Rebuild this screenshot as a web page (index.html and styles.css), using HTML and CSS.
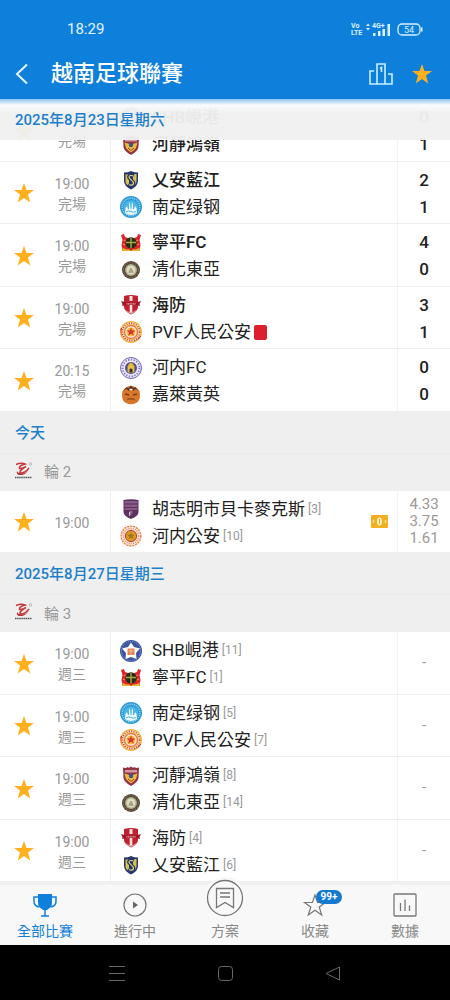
FILE: index.html
```html
<!DOCTYPE html>
<html lang="zh-Hant">
<head>
<meta charset="UTF-8" />
<meta name="viewport" content="width=device-width, initial-scale=1" />
<title>越南足球聯賽</title>
<link rel="stylesheet" href="styles.css">
</head>
<body>
  <svg class="sprite" aria-hidden="true">
    <symbol id="star" viewBox="0 0 20 20"><path d="M10 0l2.500 7H20l-6 4.600 2.200 7.900L10 15l-6.200 4.500L6 11.600 0 7h7.500z"/></symbol>

    <symbol id="nghean" viewBox="0 0 22 22">
      <path d="M4 3.500Q8 3.500 11 2q3 1.500 7 1.500V12q0 5-7 8.500Q4 17 4 12z" fill="#26366f"/>
      <path d="M5.500 5.500H9v12Q5.500 15 5.500 12zM13 5h3.500v7q0 3-3.500 5.500z" fill="#d8c24c"/>
      <path d="M14 6.500Q9 4.500 8.500 8c0 3 5.500 3 5.500 6.500-.5 3-4 3-6 1" fill="none" stroke="#26366f" stroke-width="3"/>
      <path d="M13.500 7Q9.500 5.500 9 8c0 2.500 5 3.500 4.500 6.500-.5 2-3 2-4.500 1" fill="none" stroke="#e9da72" stroke-width="1.100"/>
    </symbol>
    <symbol id="namdinh" viewBox="0 0 22 22">
      <circle cx="11" cy="11" r="11" fill="#2a9ad6"/>
      <circle cx="11" cy="11" r="8.800" fill="none" stroke="#a8dcf5" stroke-width="1.200" stroke-dasharray="1.200 1"/>
      <circle cx="11" cy="11.500" r="7.300" fill="#49b4e6"/>
      <path d="M5 17l.5-5 1.500-2 1 3h1V8l1-2 .5 7h1L12 6l1 2v5h1l1-3 1.500 2 .5 5q-3 2-6 2t-6-2z" fill="#eef9ff"/>
      <path d="M6 16q2-2 5-.5t5 0" fill="none" stroke="#49b4e6"/>
    </symbol>
    <symbol id="ninhbinh" viewBox="0 0 22 22">
      <path d="M1 3l3-1 1 3 3 1h6l3-1 1-3 3 1-1.500 5 1 5-1 6H2.500l-1-6 1-5z" fill="#d9252b"/>
      <path d="M4 8l2 1M18 8l-2 1M3 12l2 1M19 12l-2 1" stroke="#ff8b4a" stroke-width="1.300"/>
      <circle cx="11" cy="11" r="5.700" fill="#242c17"/>
      <path d="M11 6v10M6 10.500h10" stroke="#a9a943" stroke-width="1.400"/>
      <path d="M2.500 15.500q4 3.500 8.500 1 4.500 2.500 8.500-1V19h-17z" fill="#e7b42c"/>
      <path d="M8.500 16.500L11 19l2.500-2.500z" fill="#c92424"/>
    </symbol>
    <symbol id="thanhhoa" viewBox="0 0 22 22">
      <circle cx="11" cy="11" r="9" fill="#4c4a3c"/>
      <circle cx="11" cy="11" r="7.500" fill="none" stroke="#8a5b45" stroke-width="1.200" stroke-dasharray="2 1"/>
      <circle cx="11" cy="11" r="6" fill="#a9ad8c"/>
      <circle cx="11" cy="11" r="4.500" fill="#e0dcc0"/>
      <path d="M9 12.500l2-3.500 2 3.500zM8.500 13.500h5" fill="#b5a985" stroke="#96916f" stroke-width=".7"/>
    </symbol>
    <symbol id="haiphong" viewBox="0 0 22 22">
      <path d="M4 2q7-2 14 0v11q0 4-7 7.500Q4 17 4 13z" fill="#c3202f"/>
      <path d="M9.500 2h3v5h-3zM9.700 11h2.600v8l-1.300.8-1.300-.8z" fill="#f8e3e3"/>
      <path d="M1 7l5 1.500h10L21 7l-1.500 3L20 12l-4-1H6l-4 1 .5-2z" fill="#9f1524"/>
      <path d="M6.500 9.800h9" stroke="#f3c6c6" stroke-width="1.200" stroke-dasharray="1 .6"/>
      <path d="M5 16q6 5.500 12 0" fill="none" stroke="#e5a2a8"/>
    </symbol>
    <symbol id="pvf" viewBox="0 0 22 22">
      <circle cx="11" cy="11" r="11" fill="#edb83f"/>
      <path d="M1.500 7A10.500 10.500 0 0 0 20.500 15" fill="none" stroke="#cf3434" stroke-width="1.500"/>
      <circle cx="11" cy="11" r="8.700" fill="none" stroke="#fff0d8" stroke-width="2"/>
      <circle cx="11" cy="11" r="8.700" fill="none" stroke="#d6453a" stroke-width="1.600" stroke-dasharray="1.200 1.200"/>
      <circle cx="11" cy="11" r="6.300" fill="#fff3dc" stroke="#d63c34" stroke-width=".8"/>
      <circle cx="11" cy="11" r="4.500" fill="#f4b63d"/>
      <path d="M11 6.500l1.200 3h3.200l-2.500 2 .9 3.200-2.800-1.900-2.800 1.900.9-3.200-2.500-2h3.200z" fill="#d4352d"/>
    </symbol>
    <symbol id="hanoi" viewBox="0 0 22 22">
      <circle cx="11" cy="11" r="10.500" fill="#eceafa" stroke="#6f67b5"/>
      <circle cx="11" cy="11" r="8.400" fill="none" stroke="#7771c0" stroke-width="1.800" stroke-dasharray="1.300 1.500"/>
      <circle cx="11" cy="11" r="6" fill="#50498e"/>
      <path d="M7.500 15V9.500L9 7l2-1.500L13 7l1.500 2.500V15q-3.500 2-7 0z" fill="#e6bd40"/>
      <path d="M9.500 15.500v-3q1.500-2 3 0v3z" fill="#2f2a4c"/>
    </symbol>
    <symbol id="gialai" viewBox="0 0 22 22">
      <path d="M2.500 7Q6 2 11 2t8.500 5L20 10q0 8-4 9-5 2.500-10 0-4-1-4-9z" fill="#d8762b"/>
      <path d="M4 6l2.500-2.800 2 1L11 1.500l2.500 2.500 2-.8L18 6l-3-1-1.500 2L11 5 8.500 7 7 5z" fill="#5d3320"/>
      <path d="M5 10l4 1M17 10l-4 1" stroke="#7c3c1a" stroke-width="1.300"/>
      <path d="M8 14h6l1.500 2.500-2-.5h-5l-2 .5z" fill="#a4561f"/>
      <path d="M9.500 5.500h3" stroke="#fff" stroke-width="1.500"/>
    </symbol>
    <symbol id="hatinh" viewBox="0 0 22 22">
      <path d="M3 2.500Q6 3.500 7.500 2 9 3.500 11 1.500q2 2 3.500.5Q16 3.500 19 2.500L18.500 13q-.5 4-7.500 8Q4 17 3.500 13z" fill="#923044"/>
      <path d="M5 5h12v2.500H5z" fill="#cf9a9f"/>
      <path d="M4.500 8.500l5 1.500L11 12l1.500-2 5-1.500L16 14l-3 3-2 1.500L9 17l-3-3z" fill="#e9bc3d"/>
      <circle cx="11" cy="11" r="2.200" fill="#39568f"/>
      <path d="M8 14l3 2.500 3-2.500" fill="none" stroke="#a44330"/>
    </symbol>
    <symbol id="becamex" viewBox="0 0 22 22">
      <path d="M3.500 2Q11 .5 18.500 2v12q0 4-7.500 7-7.500-3-7.500-7z" fill="#5d3060"/>
      <path d="M4.500 4h13M4.500 8h13M4.500 11h13" stroke="#b285a8" stroke-width="1.100"/>
      <path d="M4.500 6h13" stroke="#7e4a7b" stroke-width="1.500"/>
      <path d="M9.500 14h3M9.500 14v4M9.500 16h2" stroke="#d2aacb" stroke-width="1.100"/>
    </symbol>
    <symbol id="cahn" viewBox="0 0 22 22">
      <circle cx="11" cy="11" r="10.800" fill="#fbe9dc"/>
      <circle cx="11" cy="11" r="9.800" fill="none" stroke="#e2753f" stroke-width="1.200" stroke-dasharray="2 1"/>
      <circle cx="11" cy="11" r="7.600" fill="none" stroke="#e48354" stroke-width="1.500" stroke-dasharray="1 1.200"/>
      <circle cx="11" cy="11" r="5.600" fill="#dd9a24" stroke="#b93a27"/>
      <path d="M11 7l1 2.800h3L12.700 11.500l.8 2.800L11 12.600l-2.500 1.700.8-2.800L7 9.800h3z" fill="#9b7620"/>
    </symbol>
    <symbol id="danang" viewBox="0 0 22 22">
      <circle cx="11" cy="11" r="11" fill="#3b55a0"/>
      <circle cx="11" cy="11" r="9.600" fill="none" stroke="#94a3d0" stroke-dasharray="1 1.200"/>
      <path d="M11 2.500l3 4.500 6 1.500-4 4.500.5 6L11 17l-5.500 2 .5-6-4-4.500L8 7z" fill="#fff"/>
      <path d="M7.500 8.500h7V15h-7z" fill="#e3824a"/>
      <path d="M8.500 11h5M11 9v6" stroke="#f8cba9" stroke-width=".8"/>
    </symbol>
    <symbol id="vleague" viewBox="0 0 20 18">
      <path d="M2 2.500Q7 .500 11 2 5 3.500 5.500 6.500 8 7 12 4.500 5 8.500 6 11q5 .5 9-5" fill="none" stroke="#c8373a" stroke-width="1.500"/>
      <path d="M3 9q-1 4.500 4 4 4 0 7-4-3 3-6.500 2.500Q4 11.500 3 9z" fill="#b5282c"/>
      <circle cx="16.500" cy="2" r="1.300" fill="none" stroke="#aaa" stroke-width=".8"/>
      <path d="M1 15.500h17" stroke="#555" stroke-width="1.600" stroke-dasharray="1.500 .6"/>
    </symbol>
  </svg>

  <header class="top">
    <div class="status">
      <span class="clock">18:29</span>
      <svg class="signals" width="74" height="18" viewBox="0 0 74 18" fill="none" stroke="#d9f2ff">
        <g fill="#d9f2ff" stroke="none">
          <text x="0" y="8" class="tiny">Vo</text>
          <text x="0" y="15" class="tiny">LTE</text>
          <text x="21" y="8" class="tiny">4G+</text>
          <path d="M15 6l2-2.500L19 6zM15 8h4l-2 2.500z"/>
          <path d="M22 13h2.500v3H22zM27 11h2.500v5H27zM31.500 9H34v7h-2.500zM36.500 4H39v12h-2.500z"/>
          <path d="M70 7.500h1.500v4H70z"/>
          <text x="53" y="13" class="percent">54</text>
        </g>
        <rect x="47" y="4" width="22" height="11" rx="4" stroke-width="1.300"/>
      </svg>
    </div>
    <div class="appbar">
      <button class="icon-btn back" aria-label="返回">
        <svg width="14" height="22" viewBox="0 0 14 22" fill="none" stroke="#e6f8ff" stroke-width="2"><path d="M12 1.500L2 11l10 9.500"/></svg>
      </button>
      <h1>越南足球聯賽</h1>
      <button class="icon-btn" aria-label="積分榜">
        <svg width="24" height="22" viewBox="0 0 24 22" fill="none" stroke="#c9efff" stroke-width="1.600"><path d="M5 8H1v13h22V11h-4M8 21V1h8v20M11 5.500l1.500-1V9"/></svg>
      </button>
      <button class="icon-btn" aria-label="收藏聯賽">
        <svg class="star" width="20" height="20"><use href="#star"/></svg>
      </button>
    </div>
  </header>

  <main class="list">
    <h2 class="date pinned">2025年8月23日星期六</h2>

    <article class="match">
      <button class="fav" aria-label="收藏"><svg class="star" width="20" height="20"><use href="#star"/></svg></button>
      <div class="time"><span>19:00</span><span>完場</span></div>
      <div class="teams">
        <div class="team win"><svg class="badge"><use href="#danang"/></svg>SHB峴港</div>
        <div class="team win"><svg class="badge"><use href="#hatinh"/></svg>河靜鴻嶺</div>
      </div>
      <div class="score"><span>0</span><span>1</span></div>
    </article>

    <article class="match">
      <button class="fav" aria-label="收藏"><svg class="star" width="20" height="20"><use href="#star"/></svg></button>
      <div class="time"><span>19:00</span><span>完場</span></div>
      <div class="teams">
        <div class="team win"><svg class="badge"><use href="#nghean"/></svg>乂安藍江</div>
        <div class="team"><svg class="badge"><use href="#namdinh"/></svg>南定绿钢</div>
      </div>
      <div class="score"><span>2</span><span>1</span></div>
    </article>

    <article class="match">
      <button class="fav" aria-label="收藏"><svg class="star" width="20" height="20"><use href="#star"/></svg></button>
      <div class="time"><span>19:00</span><span>完場</span></div>
      <div class="teams">
        <div class="team win"><svg class="badge"><use href="#ninhbinh"/></svg>寧平FC</div>
        <div class="team"><svg class="badge"><use href="#thanhhoa"/></svg>清化東亞</div>
      </div>
      <div class="score"><span>4</span><span>0</span></div>
    </article>

    <article class="match">
      <button class="fav" aria-label="收藏"><svg class="star" width="20" height="20"><use href="#star"/></svg></button>
      <div class="time"><span>19:00</span><span>完場</span></div>
      <div class="teams">
        <div class="team win"><svg class="badge"><use href="#haiphong"/></svg>海防</div>
        <div class="team"><svg class="badge"><use href="#pvf"/></svg>PVF人民公安<i class="red-card"></i></div>
      </div>
      <div class="score"><span>3</span><span>1</span></div>
    </article>

    <article class="match">
      <button class="fav" aria-label="收藏"><svg class="star" width="20" height="20"><use href="#star"/></svg></button>
      <div class="time"><span>20:15</span><span>完場</span></div>
      <div class="teams">
        <div class="team"><svg class="badge"><use href="#hanoi"/></svg>河内FC</div>
        <div class="team"><svg class="badge"><use href="#gialai"/></svg>嘉萊黃英</div>
      </div>
      <div class="score"><span>0</span><span>0</span></div>
    </article>

    <h2 class="date">今天</h2>
    <h3 class="round"><svg width="20" height="18"><use href="#vleague"/></svg>輪 2</h3>

    <article class="match">
      <button class="fav" aria-label="收藏"><svg class="star" width="20" height="20"><use href="#star"/></svg></button>
      <div class="time"><span>19:00</span></div>
      <div class="teams">
        <div class="team"><svg class="badge"><use href="#becamex"/></svg>胡志明市貝卡麥克斯<small>[3]</small></div>
        <div class="team"><svg class="badge"><use href="#cahn"/></svg>河内公安<small>[10]</small></div>
      </div>
      <svg class="ticket" width="17" height="13" viewBox="0 0 17 13">
        <rect width="17" height="13" rx="1" fill="#f3ae22"/>
        <ellipse cx="8.500" cy="6.500" rx="2.500" ry="4" fill="#fff3cc"/>
        <path d="M2.500 5v3M14.500 5v3" stroke="#fbdc8c" stroke-width="1.500"/>
        <path d="M8.500 4v5" stroke="#eda51d"/>
      </svg>
      <div class="odds"><span>4.33</span><span>3.75</span><span>1.61</span></div>
    </article>

    <h2 class="date">2025年8月27日星期三</h2>
    <h3 class="round"><svg width="20" height="18"><use href="#vleague"/></svg>輪 3</h3>

    <article class="match">
      <button class="fav" aria-label="收藏"><svg class="star" width="20" height="20"><use href="#star"/></svg></button>
      <div class="time"><span>19:00</span><span>週三</span></div>
      <div class="teams">
        <div class="team"><svg class="badge"><use href="#danang"/></svg>SHB峴港<small>[11]</small></div>
        <div class="team"><svg class="badge"><use href="#ninhbinh"/></svg>寧平FC<small>[1]</small></div>
      </div>
      <div class="odds">-</div>
    </article>

    <article class="match">
      <button class="fav" aria-label="收藏"><svg class="star" width="20" height="20"><use href="#star"/></svg></button>
      <div class="time"><span>19:00</span><span>週三</span></div>
      <div class="teams">
        <div class="team"><svg class="badge"><use href="#namdinh"/></svg>南定绿钢<small>[5]</small></div>
        <div class="team"><svg class="badge"><use href="#pvf"/></svg>PVF人民公安<small>[7]</small></div>
      </div>
      <div class="odds">-</div>
    </article>

    <article class="match">
      <button class="fav" aria-label="收藏"><svg class="star" width="20" height="20"><use href="#star"/></svg></button>
      <div class="time"><span>19:00</span><span>週三</span></div>
      <div class="teams">
        <div class="team"><svg class="badge"><use href="#hatinh"/></svg>河靜鴻嶺<small>[8]</small></div>
        <div class="team"><svg class="badge"><use href="#thanhhoa"/></svg>清化東亞<small>[14]</small></div>
      </div>
      <div class="odds">-</div>
    </article>

    <article class="match">
      <button class="fav" aria-label="收藏"><svg class="star" width="20" height="20"><use href="#star"/></svg></button>
      <div class="time"><span>19:00</span><span>週三</span></div>
      <div class="teams">
        <div class="team"><svg class="badge"><use href="#haiphong"/></svg>海防<small>[4]</small></div>
        <div class="team"><svg class="badge"><use href="#nghean"/></svg>乂安藍江<small>[6]</small></div>
      </div>
      <div class="odds">-</div>
    </article>
  </main>

  <nav class="tabs">
    <a href="#all" class="tab active">
      <svg width="24" height="24" viewBox="0 0 24 24" fill="none" stroke="#0f7fdc" stroke-width="1.500"><path d="M5 1h14v8q0 3-1 5l-4 3h-4l-4-3q-1-2-1-5z" fill="#0f7fdc" stroke="none"/><path d="M5 4H1v4q0 5 5 6M19 4h4v4q0 5-5 6M12 16v7M8 23h8"/></svg>
      全部比賽
    </a>
    <a href="#live" class="tab">
      <svg width="24" height="24" viewBox="0 0 24 24" fill="none" stroke="#777" stroke-width="1.200"><circle cx="12" cy="12" r="11"/><path d="M10 8.500l5 3.500-5 3.500z" fill="#666" stroke="none"/></svg>
      進行中
    </a>
    <a href="#plan" class="tab plan">
      <svg class="bubble" width="42" height="42" viewBox="0 0 42 42" fill="none" stroke="#777" stroke-width="1.300"><circle cx="21" cy="21" r="21" fill="#f8f8f8" stroke="none"/><circle cx="21" cy="21" r="17.500"/><path d="M12.500 11.500h17v19L21 25.500l-8.500 5zM16 16h10M16 20h10"/></svg>
      方案
    </a>
    <a href="#favorites" class="tab">
      <svg width="24" height="24" viewBox="0 0 24 24" fill="none" stroke="#777" stroke-width="1.200"><path d="M12 2l2.600 7.500h8L16.200 14l2.500 8L12 17.300 5.300 22l2.500-8L1.400 9.500h8z"/></svg>
      <span class="count">99+</span>
      收藏
    </a>
    <a href="#stats" class="tab">
      <svg width="24" height="24" viewBox="0 0 24 24" fill="none" stroke="#777" stroke-width="1.300"><rect x="1" y="1" width="22" height="22" rx="1"/><path d="M7.500 10v8M12 6.500V18M16.500 12.500V18"/></svg>
      數據
    </a>
  </nav>

  <footer class="system">
    <button class="icon-btn" aria-label="選單"><svg width="18" height="18" viewBox="0 0 18 18" stroke="#686868"><path d="M1 2.500h16M1 9.500h16M1 16.500h16"/></svg></button>
    <button class="icon-btn" aria-label="主畫面"><svg width="18" height="18" viewBox="0 0 18 18" fill="none" stroke="#686868"><rect x="2.500" y="2.500" width="14" height="14" rx="3"/></svg></button>
    <button class="icon-btn" aria-label="返回"><svg width="18" height="18" viewBox="0 0 18 18" fill="none" stroke="#686868"><path d="M15.500 3v13L2 9.500z" stroke-linejoin="round"/></svg></button>
  </footer>
</body>
</html>
```
FILE: styles.css
```css
* {
  box-sizing: border-box;
}
body {
  margin: 0;
  min-height: 100vh;
  display: flex;
  flex-direction: column;
  font-family: Roboto, "Noto Sans CJK TC", sans-serif;
  color: #222;
  background: #fff;
}
h1, h2, h3 {
  margin: 0;
}
button {
  border: 0;
  padding: 0;
  background: none;
  cursor: pointer;
}
svg {
  display: block;
  flex: none;
}
.sprite {
  position: absolute;
  width: 0;
  height: 0;
}
.star {
  fill: #ffb01c;
}

/* header */
.top {
  background: #0f7fdc;
  color: #fff;
}
.status {
  display: flex;
  justify-content: space-between;
  align-items: center;
  height: 48px;
  padding: 10px 25px 0 67px;
}
.clock {
  font-size: 15px;
  color: #e0f5ff;
}
.tiny {
  font: 700 7px Roboto, sans-serif;
}
.percent {
  font: 9px Roboto, sans-serif;
}
.appbar {
  display: flex;
  align-items: center;
  height: 51px;
  padding: 0 18px 0 15px;
}
.appbar h1 {
  flex: 1;
  font-size: 22px;
  line-height: 30px;
  font-weight: 500;
}
.back {
  margin-right: 22px;
}
.appbar .icon-btn + .icon-btn {
  margin-left: 19px;
}

/* match list */
.list {
  position: relative;
  flex: 1;
  display: flex;
  flex-direction: column;
}
.date {
  height: 41px;
  padding: 0 15px;
  font-size: 15px;
  line-height: 42px;
  font-weight: 500;
  color: #1c7fcb;
  background: #efefef;
}
.pinned {
  position: absolute;
  top: 0;
  left: 0;
  right: 0;
  z-index: 1;
  background: linear-gradient(#8fc3ef, rgba(248, 250, 252, 0.96) 6px, rgba(240, 240, 240, 0.96) 14px);
}
.round {
  display: flex;
  align-items: center;
  gap: 10px;
  height: 38px;
  padding: 0 14px 3px;
  border-top: 1px solid #eaeaea;
  font-size: 15px;
  font-weight: 400;
  color: #999;
  background: #efefef;
}
.match {
  flex: 1 0 62px;
  display: flex;
  border-bottom: 1px solid #eee;
}
.fav {
  display: flex;
  justify-content: center;
  align-items: center;
  width: 48px;
  padding-top: 2px;
}
.time {
  display: flex;
  flex-direction: column;
  justify-content: center;
  width: 63px;
  padding: 3px 14px 0 0;
  border-right: 1px solid #eee;
  font-size: 14px;
  line-height: 20px;
  text-align: center;
  color: #999;
}
.teams {
  flex: 1;
  display: flex;
  flex-direction: column;
  justify-content: center;
  padding: 3px 0 0 9px;
}
.team {
  display: flex;
  align-items: center;
  font-size: 17px;
  line-height: 27px;
  white-space: nowrap;
}
.win {
  font-weight: 500;
}
.badge {
  width: 22px;
  height: 22px;
  margin-right: 10px;
}
.team small {
  margin-left: 3px;
  font-size: 12px;
  color: #999;
}
.red-card {
  width: 13px;
  height: 15px;
  margin-left: 3px;
  border-radius: 2px;
  background: #dc1f2d;
}
.ticket {
  align-self: center;
  margin-right: 9px;
}
.score, .odds {
  display: flex;
  flex-direction: column;
  justify-content: center;
  width: 53px;
  border-left: 1px solid #f2f2f2;
  text-align: center;
}
.score {
  padding-top: 3px;
  font-size: 17px;
  line-height: 27px;
  font-weight: 500;
}
.odds {
  font-size: 15px;
  line-height: 17px;
  color: #999;
}

/* bottom tabs */
.tabs {
  display: flex;
  height: 63px;
  border-top: 3px solid #f1f1f1;
  background: #f8f8f8;
}
.tab {
  position: relative;
  flex: 1;
  display: flex;
  flex-direction: column;
  align-items: center;
  gap: 4px;
  padding-top: 8px;
  font-size: 14px;
  line-height: 20px;
  text-decoration: none;
  color: #888;
}
.active {
  color: #0f7fdc;
}
.plan {
  padding-top: 36px;
}
.bubble {
  position: absolute;
  top: -8px;
}
.count {
  position: absolute;
  top: 5px;
  left: 50%;
  margin-left: 1px;
  width: 26px;
  border-radius: 7px;
  font-size: 10px;
  line-height: 14px;
  font-weight: 700;
  text-align: center;
  color: #fff;
  background: #1679d0;
}
.system {
  display: flex;
  justify-content: center;
  gap: 90px;
  height: 55px;
  background: #000;
}
```
